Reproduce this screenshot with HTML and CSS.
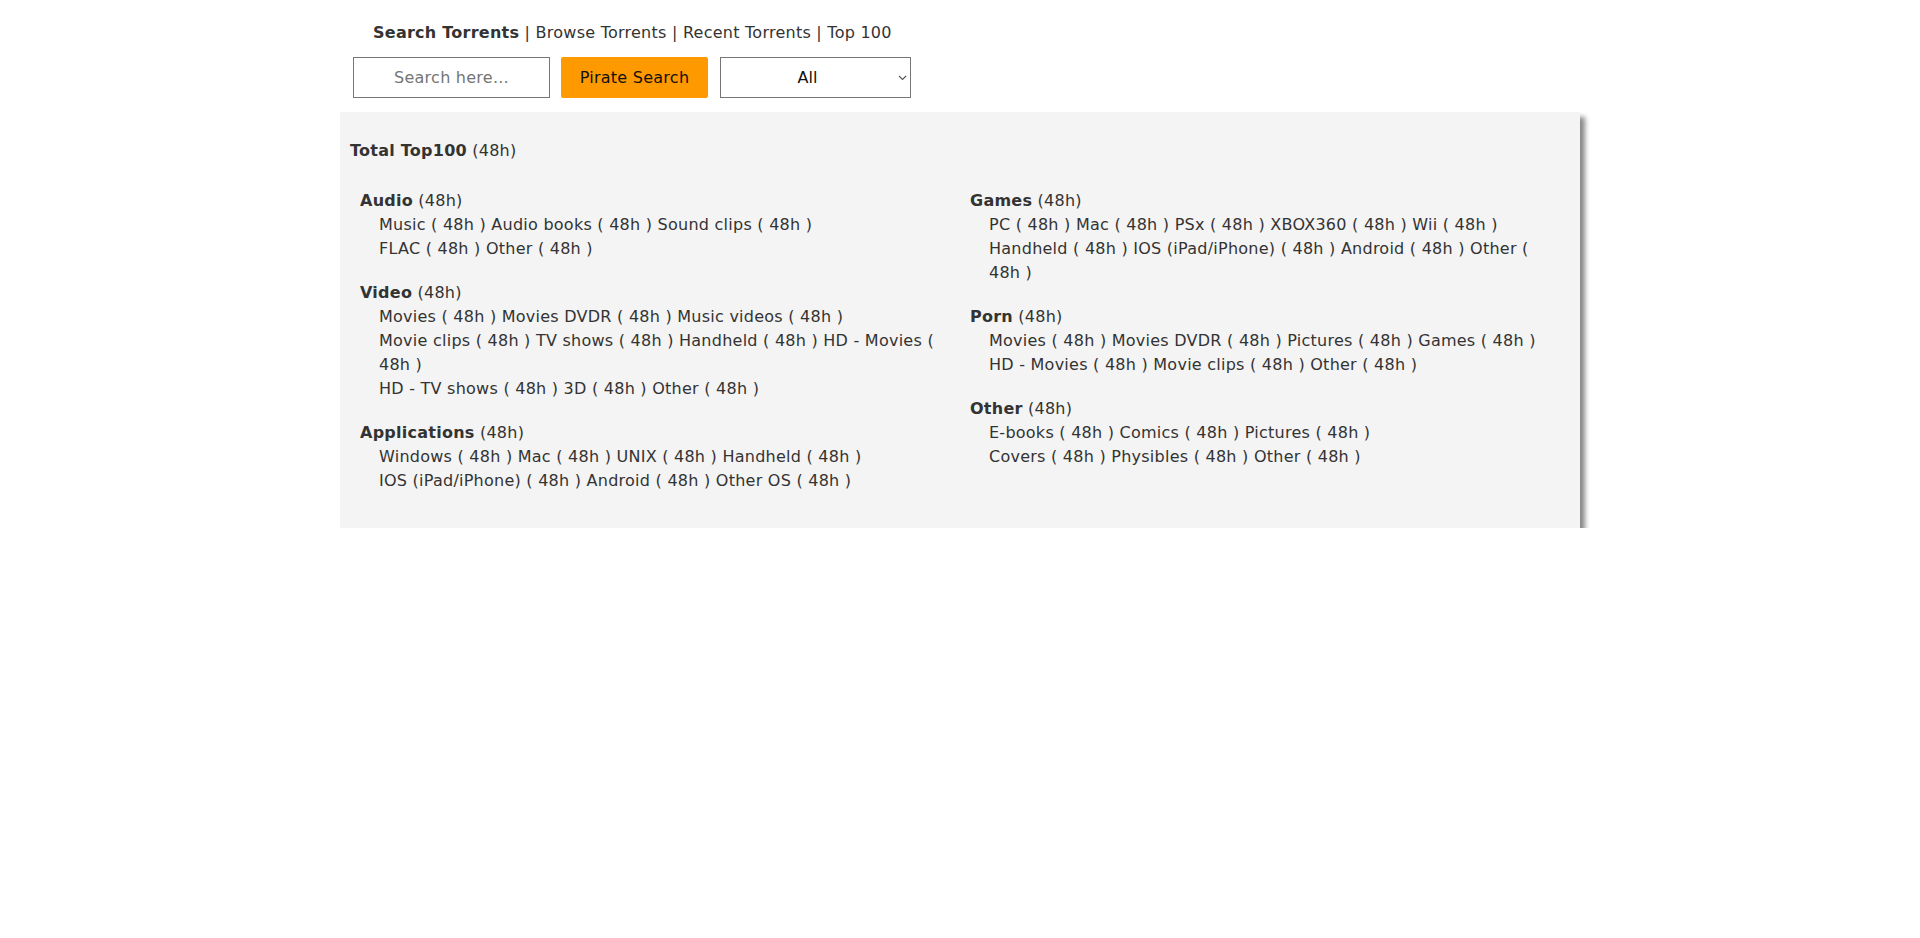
FILE: index.html
```html
<!DOCTYPE html>
<html lang="en">
<head>
<meta charset="utf-8">
<title>Top 100</title>
<link rel="stylesheet" href="styles.css">
</head>
<body>
<div class="page">
  <header class="top">
    <nav class="nav">
      <b class="nav-current">Search Torrents</b> | <a href="#">Browse Torrents</a> | <a href="#">Recent Torrents</a> | <a href="#">Top 100</a>
    </nav>
    <form class="search">
      <input class="search-input" type="text" placeholder="Search here...">
      <button class="search-btn" type="button">Pirate Search</button>
      <span class="select-wrap">
        <select class="search-select"><option>All</option></select>
        <svg class="select-chevron" width="9" height="6" viewBox="0 0 9 6" aria-hidden="true"><path d="M1 1l3.5 3.5L8 1" fill="none" stroke="#555" stroke-width="1.1"/></svg>
      </span>
    </form>
  </header>

  <main class="box">
    <h2 class="total"><b>Total Top100</b> <a href="#">(48h)</a></h2>
    <div class="cols">
      <div class="col">
        <section class="cat">
          <div class="cat-head"><b>Audio</b> <a href="#">(48h)</a></div>
          <div class="cat-line">Music ( 48h ) Audio books ( 48h ) Sound clips ( 48h )</div>
          <div class="cat-line">FLAC ( 48h ) Other ( 48h )</div>
        </section>
        <section class="cat">
          <div class="cat-head"><b>Video</b> <a href="#">(48h)</a></div>
          <div class="cat-line">Movies ( 48h ) Movies DVDR ( 48h ) Music videos ( 48h )</div>
          <div class="cat-line">Movie clips ( 48h ) TV shows ( 48h ) Handheld ( 48h ) HD - Movies ( 48h )</div>
          <div class="cat-line">HD - TV shows ( 48h ) 3D ( 48h ) Other ( 48h )</div>
        </section>
        <section class="cat">
          <div class="cat-head"><b>Applications</b> <a href="#">(48h)</a></div>
          <div class="cat-line">Windows ( 48h ) Mac ( 48h ) UNIX ( 48h ) Handheld ( 48h )</div>
          <div class="cat-line">IOS (iPad/iPhone) ( 48h ) Android ( 48h ) Other OS ( 48h )</div>
        </section>
      </div>
      <div class="col">
        <section class="cat">
          <div class="cat-head"><b>Games</b> <a href="#">(48h)</a></div>
          <div class="cat-line">PC ( 48h ) Mac ( 48h ) PSx ( 48h ) XBOX360 ( 48h ) Wii ( 48h )</div>
          <div class="cat-line">Handheld ( 48h ) IOS (iPad/iPhone) ( 48h ) Android ( 48h ) Other ( 48h )</div>
        </section>
        <section class="cat">
          <div class="cat-head"><b>Porn</b> <a href="#">(48h)</a></div>
          <div class="cat-line">Movies ( 48h ) Movies DVDR ( 48h ) Pictures ( 48h ) Games ( 48h )</div>
          <div class="cat-line">HD - Movies ( 48h ) Movie clips ( 48h ) Other ( 48h )</div>
        </section>
        <section class="cat">
          <div class="cat-head"><b>Other</b> <a href="#">(48h)</a></div>
          <div class="cat-line">E-books ( 48h ) Comics ( 48h ) Pictures ( 48h )</div>
          <div class="cat-line">Covers ( 48h ) Physibles ( 48h ) Other ( 48h )</div>
        </section>
      </div>
    </div>
  </main>
</div>
</body>
</html>
```

FILE: styles.css
```css
* { box-sizing: border-box; }
html, body { margin: 0; padding: 0; background: #fff; }
body {
  font-family: "DejaVu Sans", sans-serif;
  font-size: 16px;
  letter-spacing: 0.25px;
  color: #333;
}
a { color: #333; text-decoration: none; }
.page {
  width: 1240px;
  margin: 0 auto;
}
.top {
  padding-top: 21px;
}
.nav {
  padding-left: 33px;
  line-height: 24px;
  height: 24px;
}
.nav-current { font-weight: bold; color: #333; }
.search {
  display: flex;
  align-items: center;
  margin-top: 12px;
  padding-left: 13px;
}
.search-input {
  width: 197px;
  height: 41px;
  border: 1px solid #767676;
  text-align: center;
  font-family: inherit;
  font-size: 16px;
  letter-spacing: inherit;
  color: #333;
  background: #fff;
  outline: none;
  padding: 0 8px;
}
.search-input::placeholder { color: #757575; }
.search-btn {
  margin-left: 11px;
  width: 147px;
  height: 41px;
  background: #ff9900;
  border: none;
  border-radius: 2px;
  font-family: inherit;
  font-size: 16px;
  letter-spacing: inherit;
  color: #111;
  padding: 0;
}
.select-wrap {
  position: relative;
  display: inline-block;
  margin-left: 12px;
  height: 41px;
}
.search-select {
  -webkit-appearance: none;
  appearance: none;
  width: 191px;
  height: 41px;
  border: 1px solid #767676;
  background: #fff;
  font-family: inherit;
  font-size: 16px;
  color: #111;
  text-align: center;
  text-align-last: center;
  border-radius: 0;
  padding: 0 20px 0 4px;
}
.select-chevron {
  position: absolute;
  right: 4px;
  top: 18px;
  pointer-events: none;
}
.box {
  margin-top: 14px;
  background: #f4f4f4;
  box-shadow: 5px 5px 5px #888;
  padding: 27px 10px 35px 10px;
}
.total {
  margin: 0;
  font-size: 16px;
  font-weight: normal;
  line-height: 24px;
}
.cols {
  display: grid;
  grid-template-columns: 1fr 1fr;
  margin-top: 26px;
}
.col { padding-left: 10px; padding-right: 10px; }
.cat + .cat { margin-top: 20px; }
.cat-head { line-height: 24px; }
.cat-line {
  line-height: 24px;
  padding-left: 19px;
}
```
